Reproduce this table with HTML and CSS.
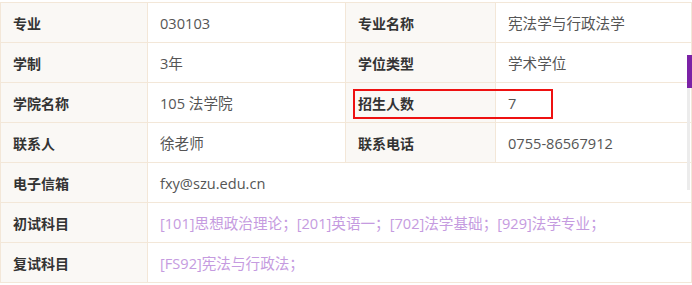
FILE: index.html
```html
<!DOCTYPE html>
<html lang="zh">
<head>
<meta charset="utf-8">
<link rel="stylesheet" href="styles.css">
</head>
<body>
<div class="wrap">
  <table class="info">
    <colgroup>
      <col class="c1"><col class="c2"><col class="c3"><col class="c4">
    </colgroup>
    <tr><th>专业</th><td>030103</td><th>专业名称</th><td>宪法学与行政法学</td></tr>
    <tr><th>学制</th><td>3年</td><th>学位类型</th><td>学术学位</td></tr>
    <tr><th>学院名称</th><td>105 法学院</td><th>招生人数</th><td>7</td></tr>
    <tr><th>联系人</th><td>徐老师</td><th>联系电话</th><td>0755-86567912</td></tr>
    <tr><th>电子信箱</th><td colspan="3">fxy@szu.edu.cn</td></tr>
    <tr><th>初试科目</th><td colspan="3" class="link">[101]思想政治理论；[201]英语一；[702]法学基础；[929]法学专业；</td></tr>
    <tr><th>复试科目</th><td colspan="3" class="link">[FS92]宪法与行政法；</td></tr>
  </table>
  <div class="highlight"></div>
  <div class="track"></div>
  <div class="thumb"></div>
</div>
</body>
</html>
```

FILE: styles.css
```css
html, body {
  margin: 0;
  padding: 0;
  background: #ffffff;
}
.wrap {
  position: relative;
  padding-top: 2px;
  width: 692px;
  height: 283px;
  overflow: hidden;
}
.info {
  border-collapse: collapse;
  width: 691px;
  table-layout: fixed;
  font-family: "Open Sans", "Noto Sans CJK SC", sans-serif;
  font-size: 14px;
}
.c1 { width: 147px; }
.c2 { width: 198px; }
.c3 { width: 150px; }
.c4 { width: 196px; }
.info tr {
  height: 40px;
}
.info th, .info td {
  border: 1px solid #f3e7d8;
  padding: 0 12px;
  text-align: left;
  vertical-align: middle;
  white-space: nowrap;
}
.info th {
  background: #faf8f5;
  color: #333333;
  font-weight: bold;
  font-family: "Noto Sans CJK SC", sans-serif;
}
.info td {
  color: #555555;
  background: #ffffff;
  font-size: 14.6px;
}
.info td.link {
  color: #c59be0;
}
.highlight {
  position: absolute;
  left: 353px;
  top: 89px;
  width: 200px;
  height: 30px;
  border: 2px solid #ee1111;
  box-sizing: border-box;
}
.track {
  position: absolute;
  left: 687px;
  top: 55px;
  width: 3px;
  height: 135px;
  background: #ececec;
}
.thumb {
  position: absolute;
  left: 687px;
  top: 55px;
  width: 5px;
  height: 33px;
  background: #7b22a6;
}
```
